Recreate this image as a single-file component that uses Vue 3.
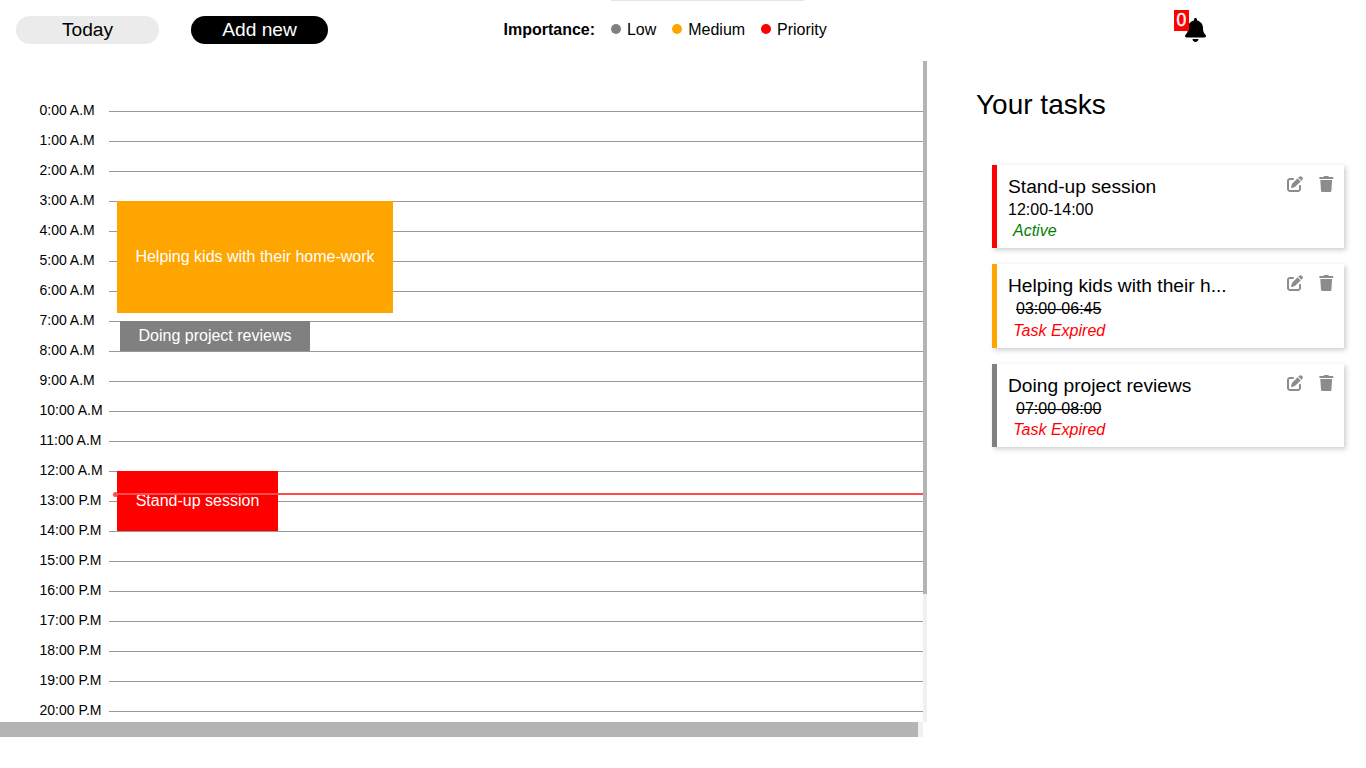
<script setup>
const hours = Array.from({ length: 21 }, (_, h) => `${h}:00 ${h < 13 ? 'A.M' : 'P.M'}`)

const events = [
  { name: 'Helping kids with their home-work', level: 'medium', left: 117, top: 140, width: 276, height: 112 },
  { name: 'Doing project reviews', level: 'low', left: 120, top: 260, width: 190, height: 30 },
  { name: 'Stand-up session', level: 'priority', left: 117, top: 410, width: 161, height: 60 },
]

const tasks = [
  { name: 'Stand-up session', time: '12:00-14:00', level: 'priority', expired: false },
  { name: 'Helping kids with their h...', time: '03:00-06:45', level: 'medium', expired: true },
  { name: 'Doing project reviews', time: '07:00-08:00', level: 'low', expired: true },
]

const box = (e) => ({
  left: e.left + 'px',
  top: e.top + 'px',
  width: e.width + 'px',
  height: e.height + 'px',
})
</script>

<template>
  <div class="page">
    <span class="top-strip"></span>
    <header class="bar">
      <button class="btn today">Today</button>
      <button class="btn add">Add new</button>
      <div class="legend">
        <b>Importance:</b>
        <span class="key"><i class="dot low"></i>Low</span>
        <span class="key"><i class="dot medium"></i>Medium</span>
        <span class="key"><i class="dot priority"></i>Priority</span>
      </div>
      <div class="bell">
        <svg width="21" height="24" viewBox="0 0 448 512">
          <path d="M224 512c35.3 0 64-28.700 64-64H160c0 35.300 28.700 64 64 64zm215.400-149.700c-19.300-20.800-55.500-52-55.500-154.300 0-77.700-54.500-139.900-127.900-155.200V32c0-17.700-14.300-32-32-32s-32 14.300-32 32v20.800C118.600 68.100 64.100 130.300 64.100 208c0 102.300-36.200 133.500-55.500 154.300-6 6.400-8.600 14.100-8.600 21.700.1 16.400 13 32 32.100 32h383.800c19.100 0 32-15.600 32.100-32 0-7.600-2.700-15.300-8.600-21.700z" />
        </svg>
        <span class="badge">0</span>
      </div>
    </header>

    <main class="body">
      <section class="calendar">
        <div class="view">
          <div class="grid">
            <div v-for="h in hours" :key="h" class="row">
              <span class="hour">{{ h }}</span>
              <span class="line"></span>
            </div>
          </div>
          <div v-for="e in events" :key="e.name" class="event" :class="e.level" :style="box(e)">
            <span>{{ e.name }}</span>
          </div>
          <div class="now"></div>
        </div>
        <div class="vbar"><div class="vthumb"></div></div>
        <div class="hbar"><div class="hthumb"></div></div>
      </section>

      <aside class="tasks">
        <h2>Your tasks</h2>
        <article v-for="t in tasks" :key="t.name" class="card" :class="'edge-' + t.level">
          <div class="info">
            <div class="name">{{ t.name }}</div>
            <div class="time" :class="{ done: t.expired }">{{ t.time }}</div>
            <div class="status" :class="{ late: t.expired }">{{ t.expired ? 'Task Expired' : 'Active' }}</div>
          </div>
          <div class="tools">
            <svg width="16" height="16" viewBox="0 0 512 512">
              <path d="M471.600 21.700c-21.900-21.900-57.300-21.900-79.200 0L362.300 51.700l97.900 97.900 30.100-30.100c21.900-21.900 21.900-57.300 0-79.200L471.600 21.700zM172.400 241.700c-6.100 6.100-10.800 13.600-13.500 21.900l-29.600 88.800c-2.900 8.600-.6 18.100 5.800 24.600s15.900 8.700 24.600 5.800l88.800-29.600c8.200-2.700 15.700-7.400 21.900-13.500L437.700 172.300 339.700 74.300 172.400 241.700zM96 64C43 64 0 107 0 160v256c0 53 43 96 96 96h256c53 0 96-43 96-96v-96c0-17.700-14.300-32-32-32s-32 14.300-32 32v96c0 17.700-14.300 32-32 32H96c-17.700 0-32-14.300-32-32V160c0-17.700 14.300-32 32-32h96c17.700 0 32-14.300 32-32s-14.300-32-32-32H96z" />
            </svg>
            <svg width="16" height="16" viewBox="0 0 16 16">
              <path d="M1.400 .9h4l.8-.9h4l.8.9h4.200V2.900H1.400zM2.300 4h11.800l-.7 10.700c-.1.800-.6 1.300-1.400 1.300H4.400c-.8 0-1.300-.5-1.400-1.300z" />
            </svg>
          </div>
        </article>
      </aside>
    </main>
  </div>
</template>

<style>
body {
  margin: 0;
  background: #fff;
  overflow: hidden;
}
</style>

<style scoped>
.page {
  position: relative;
  width: 1366px;
  height: 768px;
  overflow: hidden;
  font: 16px "Liberation Sans", Arial, sans-serif;
  color: #000;
}
.top-strip {
  position: absolute;
  left: 611px;
  top: 0;
  width: 193px;
  height: 1px;
  background: #e5e5e5;
}
.bar {
  display: flex;
  align-items: center;
  box-sizing: border-box;
  height: 61px;
  padding: 0 0 2px 16px;
}
.btn {
  height: 28px;
  padding: 0;
  border: 0;
  border-radius: 14px;
  font: 19.2px/28px "Liberation Sans", Arial, sans-serif;
}
.today {
  width: 143px;
  background: #ebebeb;
  color: #000;
}
.add {
  width: 137px;
  margin-left: 32px;
  background: #000;
  color: #fff;
}
.legend {
  display: flex;
  align-items: center;
  gap: 16px;
  width: 325px;
  margin-left: 175.500px;
}
.key {
  display: flex;
  align-items: center;
}
.dot {
  width: 10px;
  height: 10px;
  margin: 0 5.900px 1px 0;
  border-radius: 50%;
}
.low { background: gray; }
.medium { background: orange; }
.priority { background: red; }
.bell {
  position: relative;
  height: 24px;
  margin-left: 356.500px;
}
.bell svg {
  display: block;
}
.badge {
  position: absolute;
  left: -11px;
  top: -8px;
  width: 15px;
  height: 21px;
  background: red;
  color: #fff;
  font-size: 17.600px;
  line-height: 20px;
  text-align: center;
  -webkit-text-stroke: 0.4px #fff;
}
.body {
  display: flex;
}
.calendar {
  display: grid;
  grid-template: 661px 15px / 923px 4px;
}
.view {
  position: relative;
  overflow: hidden;
}
.grid {
  padding: 35px 0 0 39.500px;
}
.row {
  display: flex;
  align-items: center;
  height: 30px;
}
.hour {
  width: 69.500px;
  padding-bottom: 2px;
  font-size: 14px;
  line-height: 16px;
  white-space: nowrap;
}
.line {
  flex: 1;
  height: 1px;
  margin-top: 1px;
  background: #999;
}
.event {
  position: absolute;
  display: flex;
  align-items: center;
  justify-content: center;
  color: #fff;
  white-space: nowrap;
}
.now {
  position: absolute;
  left: 115px;
  right: 0;
  top: 432px;
  height: 2px;
  background: #ff4d4d;
}
.now::before {
  content: "";
  position: absolute;
  left: -2px;
  top: -1px;
  width: 5px;
  height: 5px;
  border-radius: 50%;
  background: #ff4d4d;
}
.vbar,
.hbar {
  background: #f0f0f0;
}
.vthumb {
  height: 533px;
  background: #b4b4b4;
}
.hthumb {
  width: 918px;
  height: 15px;
  background: #b4b4b4;
}
.tasks {
  width: 369px;
  margin-left: 49px;
}
h2 {
  margin: 27px 0 44px;
  font-size: 28px;
  font-weight: 400;
  line-height: 33px;
}
.card {
  display: flex;
  justify-content: space-between;
  box-sizing: border-box;
  width: 352px;
  height: 83.400px;
  margin: 0 0 16px 16px;
  padding: 10px 10px 0 11px;
  border-left: 5px solid;
  box-shadow: 2px 2px 5px rgba(0, 0, 0, 0.2);
}
.edge-low { border-color: gray; }
.edge-medium { border-color: orange; }
.edge-priority { border-color: red; }
.name {
  font-size: 19.200px;
  line-height: 23px;
}
.time {
  line-height: 24px;
}
.done {
  margin-left: 8px;
  text-decoration: line-through;
}
.status {
  margin-top: 0.250px;
  padding-left: 5px;
  font-style: italic;
  line-height: 18.400px;
  color: green;
}
.late {
  padding-left: 5.300px;
  color: red;
}
.tools {
  display: flex;
  gap: 15px;
  padding-top: 1px;
  fill: #8c8c8c;
}
</style>
